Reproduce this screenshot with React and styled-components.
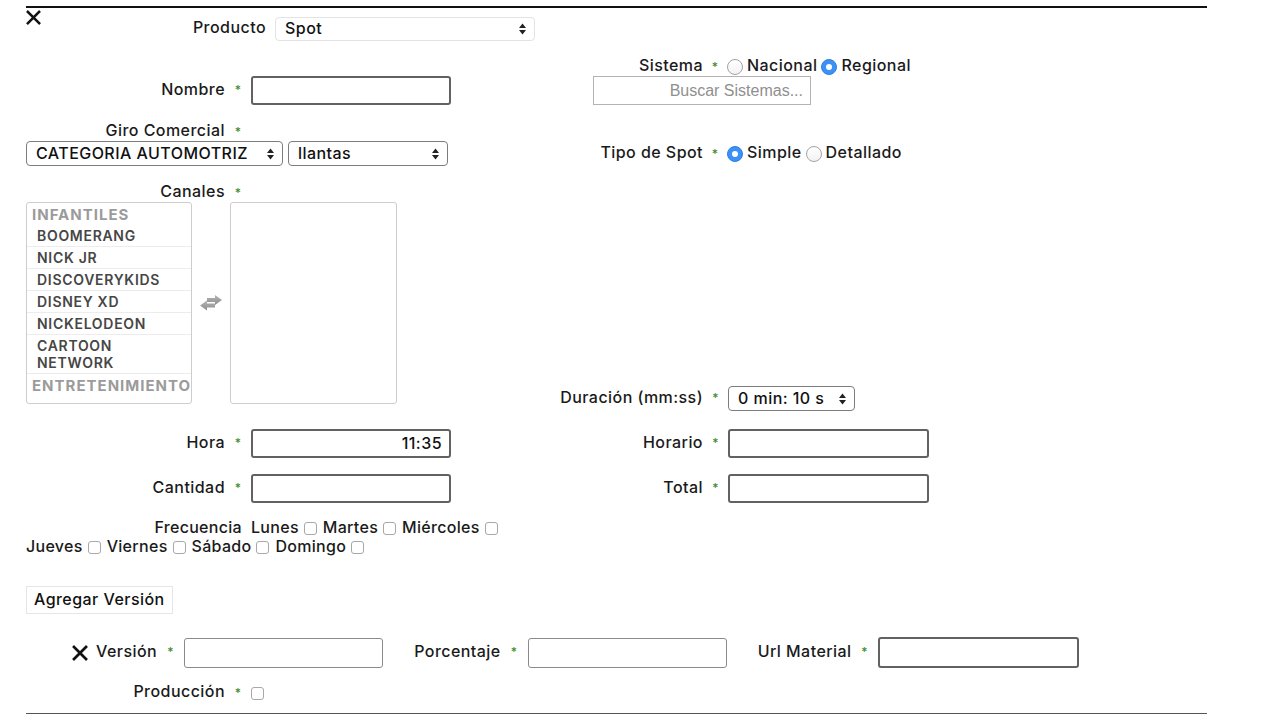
import React from "react";
import styled, { createGlobalStyle, css } from "styled-components";

const GlobalStyle = createGlobalStyle`
  html, body { margin: 0; padding: 0; background: #fff; }
  body {
    font-family: Inter, "Open Sans", "DejaVu Sans", sans-serif;
    font-size: 16px;
    font-weight: 500;
    letter-spacing: 0.45px;
    color: #1a1a1a;
  }
  * { box-sizing: border-box; }
`;

const Page = styled.div`
  margin: 6px 0 0 26px;
  width: 1181px;
  border-top: 2px solid #111;
  border-bottom: 1px solid #555;
  padding-bottom: 11px;
`;

const Header = styled.div`
  display: flex;
  align-items: flex-start;
`;

const CloseBtn = styled.span`
  display: inline-flex;
  width: ${(p) => p.$size}px;
  height: ${(p) => p.$size}px;
  margin-top: ${(p) => p.$top || 0}px;
  margin-right: ${(p) => p.$right || 0}px;
  color: #111;
  flex: none;
`;

const CloseIcon = ({ size = 15, top, right }) => (
  <CloseBtn $size={size} $top={top} $right={right}>
    <svg width={size} height={size} viewBox="0 0 16 16">
      <path d="M2 2 L14 14 M14 2 L2 14" stroke="currentColor" strokeWidth="2.7" strokeLinecap="square" />
    </svg>
  </CloseBtn>
);

const Field = styled.div`
  display: flex;
  align-items: center;
  min-height: 18px;
  margin-top: ${(p) => p.$top || 0}px;
  margin-left: ${(p) => p.$left || 0}px;
`;

const Label = styled.span`
  display: inline-block;
  width: ${(p) => (p.$width ? `${p.$width}px` : "auto")};
  text-align: right;
  flex: none;
  white-space: nowrap;
  line-height: 15px;
  padding-bottom: 3px;
  margin-right: ${(p) => p.$gap || 0}px;
`;

const Req = styled.span`
  display: inline-block;
  width: ${(p) => p.$width || 26}px;
  text-align: center;
  color: #3f8c2c;
  font-size: 12px;
  line-height: 12px;
  flex: none;
  margin-top: -1px;
`;

const TextInput = styled.input`
  width: ${(p) => p.$width}px;
  height: ${(p) => p.$height || 29}px;
  border: ${(p) =>
    p.$tone === "light" ? "1px solid #8a8a8a" : p.$tone === "flat" ? "1px solid #b3b3b3" : "2px solid #626262"};
  border-radius: ${(p) => (p.$tone === "flat" ? 0 : 3)}px;
  background: #fff;
  padding: 0 7px 2px;
  font: inherit;
  letter-spacing: inherit;
  color: #111;
  text-align: ${(p) => p.$align || "left"};
  outline: none;
  flex: none;
  &::placeholder {
    color: #8f8f8f;
    font-family: "Liberation Sans", Arial, sans-serif;
    font-weight: 400;
    font-size: 16px;
    letter-spacing: 0;
  }
`;

const Select = styled.div`
  display: flex;
  align-items: center;
  justify-content: space-between;
  width: ${(p) => p.$width}px;
  height: ${(p) => p.$height || 25}px;
  border: 1px solid ${(p) => (p.$tone === "light" ? "#e3e3e3" : "#7d7d7d")};
  border-radius: 4px;
  background: #fff;
  padding: 0 8px 2px 9px;
  flex: none;
  white-space: nowrap;
  color: #111;
`;

const ArrowsSvg = styled.svg`
  flex: none;
  margin-left: 6px;
  margin-top: 2px;
`;

const Arrows = () => (
  <ArrowsSvg width="7" height="12" viewBox="0 0 7 12">
    <path d="M0 5 L3.5 0.5 L7 5 Z M0 7 L3.5 11.5 L7 7 Z" fill="#222" />
  </ArrowsSvg>
);

const Columns = styled.div`
  display: flex;
  align-items: flex-start;
`;

const LeftCol = styled.div`
  width: 509px;
  flex: none;
  padding-top: ${(p) => p.$top || 0}px;
`;

const RightCol = styled.div`
  flex: 1;
  padding-top: ${(p) => p.$top || 0}px;
`;

const Row = styled.div`
  display: flex;
  align-items: center;
  gap: ${(p) => p.$gap || 0}px;
  margin-top: ${(p) => p.$top || 0}px;
`;

const Options = styled.div`
  display: flex;
  align-items: center;
  height: 18px;
`;

const Option = styled.label`
  display: inline-flex;
  align-items: center;
  gap: 4px;
  margin-right: 4px;
  line-height: 15px;
  padding-bottom: 3px;
`;

const Radio = styled.span`
  display: inline-block;
  width: 16px;
  height: 16px;
  border-radius: 50%;
  flex: none;
  margin-top: 3px;
  ${(p) =>
    p.$checked
      ? css`
          background: #3b91f5;
          border: 1px solid #2f7fe0;
          &::after {
            content: "";
            display: block;
            width: 6px;
            height: 6px;
            margin: 4px;
            border-radius: 50%;
            background: #fff;
          }
        `
      : css`
          background: linear-gradient(#fff, #f3f3f3);
          border: 1px solid #a3a3a3;
        `}
`;

const Check = styled.span`
  display: inline-block;
  width: 13px;
  height: 13px;
  border: 1px solid #a8a8a8;
  border-radius: 3px;
  background: #fff;
  flex: none;
`;

const ListArea = styled.div`
  display: flex;
  align-items: center;
  gap: 8px;
  margin-top: ${(p) => p.$top || 0}px;
`;

const ListBox = styled.div`
  width: ${(p) => p.$width}px;
  height: 202px;
  border: 1px solid #cdcdcd;
  border-radius: 3px;
  overflow: hidden;
  background: #fff;
  flex: none;
`;

const GroupLabel = styled.div`
  padding: 3px 0 2px 5px;
  line-height: 17px;
  font-size: 15px;
  font-weight: 700;
  letter-spacing: 1px;
  color: #9b9b9b;
  white-space: nowrap;
`;

const ListItem = styled.div`
  padding: 2px 8px 2px 10px;
  line-height: 17px;
  font-size: 14px;
  font-weight: 600;
  letter-spacing: 0.7px;
  color: #464646;
  border-bottom: 1px solid #ececec;
`;

const SwapSvg = styled.svg`
  flex: none;
`;

const SwapIcon = () => (
  <SwapSvg width="22" height="16" viewBox="0 0 22 16">
    <defs>
      <linearGradient id="swapg" x1="0" y1="0" x2="0" y2="1">
        <stop offset="0" stopColor="#b5b5b5" />
        <stop offset="1" stopColor="#8e8e8e" />
      </linearGradient>
    </defs>
    <path d="M7 3 H15 V0 L22 5 L15 10 V7 H7 Z" fill="url(#swapg)" />
    <path d="M15 8.5 H7 V5.5 L0 10.5 L7 15.5 V12.5 H15 Z" fill="url(#swapg)" />
  </SwapSvg>
);

const Half = styled.div`
  display: flex;
  align-items: center;
  width: ${(p) => (p.$width ? `${p.$width}px` : "auto")};
  flex: none;
`;

const FreqLine = styled.div`
  display: flex;
  flex-wrap: wrap;
  align-items: center;
  width: 509px;
  margin-top: 16px;
  letter-spacing: 0.3px;
`;

const FreqLabel = styled.span`
  width: 216px;
  text-align: right;
  margin-right: 9px;
  line-height: 16px;
  padding-bottom: 3px;
`;

const Day = styled.span`
  display: inline-flex;
  align-items: center;
  gap: 5px;
  margin-right: 6px;
  line-height: 16px;
  padding-bottom: 3px;
  & > span { margin-top: 3px; }
`;

const Button = styled.button`
  display: block;
  margin-top: 29px;
  height: 28px;
  padding: 0 7px 2px;
  border: 1px solid #e6e6e6;
  border-radius: 0;
  background: #fff;
  font: inherit;
  letter-spacing: inherit;
  color: #111;
`;

const VersionRow = styled.div`
  display: flex;
  align-items: center;
  padding-left: 46px;
  margin-top: 23px;
`;

const VersionGroup = styled.div`
  display: flex;
  align-items: center;
  margin-right: 31px;
`;

const channels = ["BOOMERANG", "NICK JR", "DISCOVERYKIDS", "DISNEY XD", "NICKELODEON", "CARTOON NETWORK"];
const days = ["Lunes", "Martes", "Miércoles", "Jueves", "Viernes", "Sábado", "Domingo"];

export default function App() {
  return (
    <>
      <GlobalStyle />
      <Page>
        <Header>
          <CloseIcon size={15} top={2} />
          <Field $top={9}>
            <Label $width={225} $gap={9}>Producto</Label>
            <Select $width={260} $height={24} $tone="light">
              <span>Spot</span>
              <Arrows />
            </Select>
          </Field>
        </Header>

        <Columns>
          <LeftCol $top={35}>
            <Field>
              <Label $width={199}>Nombre</Label>
              <Req>*</Req>
              <TextInput $width={200} />
            </Field>
            <Field $top={18}>
              <Label $width={199}>Giro Comercial</Label>
              <Req>*</Req>
            </Field>
            <Row $top={0} $gap={5}>
              <Select $width={257}>
                <span>CATEGORIA AUTOMOTRIZ</span>
                <Arrows />
              </Select>
              <Select $width={160}>
                <span>llantas</span>
                <Arrows />
              </Select>
            </Row>
            <Field $top={18}>
              <Label $width={199}>Canales</Label>
              <Req>*</Req>
            </Field>
            <ListArea $top={0}>
              <ListBox $width={166}>
                <GroupLabel>INFANTILES</GroupLabel>
                {channels.map((c) => (
                  <ListItem key={c}>{c}</ListItem>
                ))}
                <GroupLabel>ENTRETENIMIENTO</GroupLabel>
              </ListBox>
              <SwapIcon />
              <ListBox $width={167} />
            </ListArea>
          </LeftCol>

          <RightCol $top={17}>
            <Field>
              <Label $width={168}>Sistema</Label>
              <Req $width={24}>*</Req>
              <Options>
                <Option>
                  <Radio />
                  Nacional
                </Option>
                <Option>
                  <Radio $checked />
                  Regional
                </Option>
              </Options>
            </Field>
            <Field $top={0} $left={58}>
              <TextInput $width={218} $tone="flat" $align="right" placeholder="Buscar Sistemas..." />
            </Field>
            <Field $top={40}>
              <Label $width={168}>Tipo de Spot</Label>
              <Req $width={24}>*</Req>
              <Options>
                <Option>
                  <Radio $checked />
                  Simple
                </Option>
                <Option>
                  <Radio />
                  Detallado
                </Option>
              </Options>
            </Field>
            <Field $top={223}>
              <Label $width={168}>Duración (mm:ss)</Label>
              <Req $width={25}>*</Req>
              <Select $width={127}>
                <span>0 min: 10 s</span>
                <Arrows />
              </Select>
            </Field>
          </RightCol>
        </Columns>

        <Row $top={18}>
          <Half $width={509}>
            <Label $width={199}>Hora</Label>
            <Req>*</Req>
            <TextInput $width={200} $align="right" defaultValue="11:35" />
          </Half>
          <Half>
            <Label $width={168}>Horario</Label>
            <Req $width={25}>*</Req>
            <TextInput $width={201} />
          </Half>
        </Row>
        <Row $top={16}>
          <Half $width={509}>
            <Label $width={199}>Cantidad</Label>
            <Req>*</Req>
            <TextInput $width={200} />
          </Half>
          <Half>
            <Label $width={168}>Total</Label>
            <Req $width={25}>*</Req>
            <TextInput $width={201} />
          </Half>
        </Row>

        <FreqLine>
          <FreqLabel>Frecuencia</FreqLabel>
          {days.map((d) => (
            <Day key={d}>
              {d}
              <Check />
            </Day>
          ))}
        </FreqLine>

        <Button type="button">Agregar Versión</Button>

        <VersionRow>
          <CloseIcon size={16} right={8} />
          <VersionGroup>
            <Label>Versión</Label>
            <Req $width={27}>*</Req>
            <TextInput $width={199} $height={30} $tone="light" />
          </VersionGroup>
          <VersionGroup>
            <Label>Porcentaje</Label>
            <Req $width={27}>*</Req>
            <TextInput $width={199} $height={30} $tone="light" />
          </VersionGroup>
          <VersionGroup>
            <Label>Url Material</Label>
            <Req $width={26}>*</Req>
            <TextInput $width={201} $height={31} />
          </VersionGroup>
        </VersionRow>

        <Field $top={16}>
          <Label $width={199}>Producción</Label>
          <Req>*</Req>
          <Check />
        </Field>
      </Page>
    </>
  );
}
